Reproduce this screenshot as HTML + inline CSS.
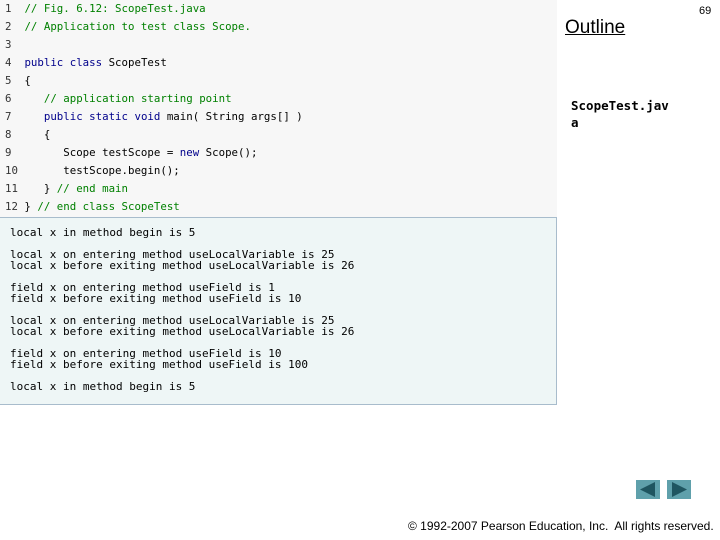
<!DOCTYPE html>
<html><head><style>
body{margin:0;width:720px;height:540px;background:#fff;position:relative;overflow:hidden;font-family:"Liberation Sans",sans-serif}
.code{position:absolute;left:0;top:0;width:557px;height:217px;background:#f7f7f7}
.ln{position:absolute;font-family:"DejaVu Sans Mono",monospace;font-size:10.75px;white-space:pre;color:#000;line-height:12px}
.n{color:#333}.c{color:#008000}.k{color:#00008b}
.out{position:absolute;left:0;top:217px;width:556px;height:186px;background:#eef6f6;border:1px solid #a8bccc;border-left:none}
.o{position:absolute;left:10px;font-family:"DejaVu Sans Mono",monospace;font-size:11px;white-space:pre;line-height:11px;color:#000}
.btn{position:absolute;top:480px;width:24px;height:19px;background:#5fa0ab}
</style></head><body>
<div class="code"></div>
<div class="ln" style="left:5px;top:3px"><span class="n">1</span>  <span class="c">// Fig. 6.12: ScopeTest.java</span></div>
<div class="ln" style="left:5px;top:21px"><span class="n">2</span>  <span class="c">// Application to test class Scope.</span></div>
<div class="ln" style="left:5px;top:39px"><span class="n">3</span></div>
<div class="ln" style="left:5px;top:57px"><span class="n">4</span>  <span class="k">public class</span> ScopeTest</div>
<div class="ln" style="left:5px;top:75px"><span class="n">5</span>  {</div>
<div class="ln" style="left:5px;top:93px"><span class="n">6</span>     <span class="c">// application starting point</span></div>
<div class="ln" style="left:5px;top:111px"><span class="n">7</span>     <span class="k">public static void</span> main( String args[] )</div>
<div class="ln" style="left:5px;top:129px"><span class="n">8</span>     {</div>
<div class="ln" style="left:5px;top:147px"><span class="n">9</span>        Scope testScope = <span class="k">new</span> Scope();</div>
<div class="ln" style="left:5px;top:165px"><span class="n">10</span>       testScope.begin();</div>
<div class="ln" style="left:5px;top:183px"><span class="n">11</span>    } <span class="c">// end main</span></div>
<div class="ln" style="left:5px;top:201px"><span class="n">12</span> } <span class="c">// end class ScopeTest</span></div>
<div class="out"></div>
<div class="o" style="top:227px">local x in method begin is 5</div>
<div class="o" style="top:249px">local x on entering method useLocalVariable is 25
local x before exiting method useLocalVariable is 26</div>
<div class="o" style="top:282px">field x on entering method useField is 1
field x before exiting method useField is 10</div>
<div class="o" style="top:315px">local x on entering method useLocalVariable is 25
local x before exiting method useLocalVariable is 26</div>
<div class="o" style="top:348px">field x on entering method useField is 10
field x before exiting method useField is 100</div>
<div class="o" style="top:381px">local x in method begin is 5</div>
<div style="position:absolute;left:565px;top:17px;font-size:19px;text-decoration:underline">Outline</div>
<div style="position:absolute;left:699px;top:5px;font-size:11px">69</div>
<div style="position:absolute;left:571px;top:97px;font-family:'DejaVu Sans Mono',monospace;font-size:12.5px;font-weight:bold;line-height:17px">ScopeTest.jav<br>a</div>
<div class="btn" style="left:636px"><svg width="24" height="19"><polygon points="4,9.5 19,2 19,17" fill="#1f5560"/></svg></div>
<div class="btn" style="left:667px"><svg width="24" height="19"><polygon points="20,9.5 5,2 5,17" fill="#1f5560"/></svg></div>
<div style="position:absolute;left:408px;top:519px;font-size:12px;white-space:pre">© 1992-2007 Pearson Education, Inc.  All rights reserved.</div>
</body></html>
